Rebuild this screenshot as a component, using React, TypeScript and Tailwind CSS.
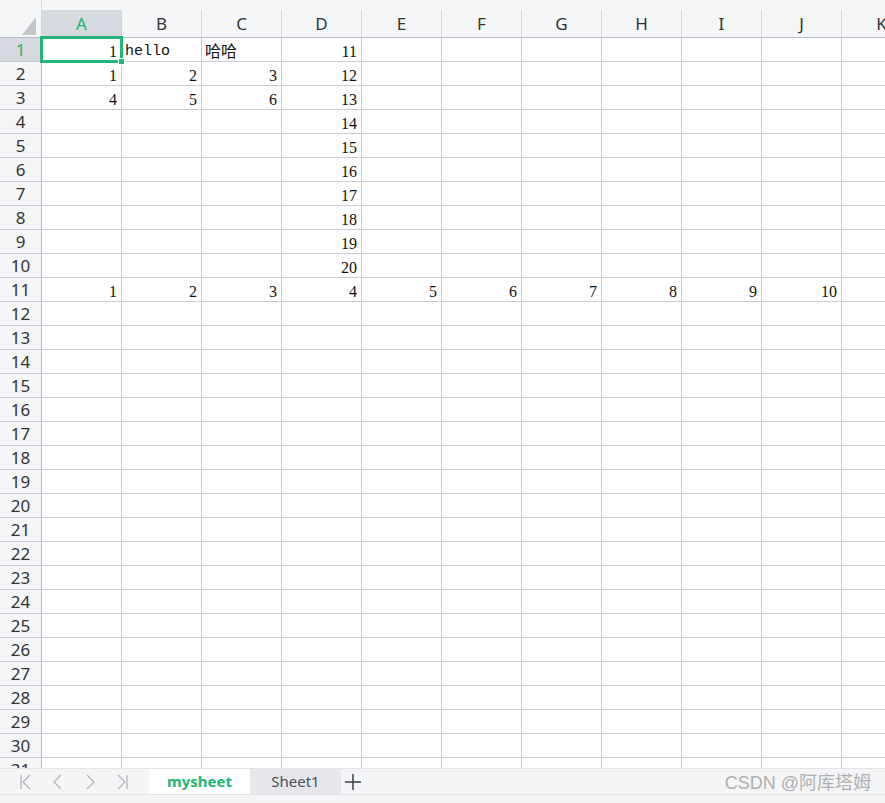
import React from "react";

const COLS = ["A", "B", "C", "D", "E", "F", "G", "H", "I", "J", "K"];
const ROWS = Array.from({ length: 31 }, (_, i) => i + 1);

type Cell = { v: string; kind?: "num" | "text" | "cjk" };

const DATA: Record<string, Cell> = {
  A1: { v: "1", kind: "num" },
  B1: { v: "hello", kind: "text" },
  C1: { v: "哈哈", kind: "cjk" },
  D1: { v: "11", kind: "num" },
  A2: { v: "1", kind: "num" },
  B2: { v: "2", kind: "num" },
  C2: { v: "3", kind: "num" },
  D2: { v: "12", kind: "num" },
  A3: { v: "4", kind: "num" },
  B3: { v: "5", kind: "num" },
  C3: { v: "6", kind: "num" },
  D3: { v: "13", kind: "num" },
  D4: { v: "14", kind: "num" },
  D5: { v: "15", kind: "num" },
  D6: { v: "16", kind: "num" },
  D7: { v: "17", kind: "num" },
  D8: { v: "18", kind: "num" },
  D9: { v: "19", kind: "num" },
  D10: { v: "20", kind: "num" },
};
COLS.slice(0, 10).forEach((c, i) => {
  DATA[`${c}11`] = { v: String(i + 1), kind: "num" };
});

const sans = { fontFamily: '"Noto Sans", "Open Sans", sans-serif' };

function CellBox({ cell }: { cell?: Cell }) {
  if (!cell) return null;
  if (cell.kind === "num")
    return (
      <span
        className="block w-full pr-[4px] pt-[2px] text-right text-[16px] leading-[23px] text-[#111]"
        style={{ fontFamily: '"Liberation Serif", serif' }}
      >
        {cell.v}
      </span>
    );
  if (cell.kind === "cjk")
    return (
      <span
        className="block w-full pl-[3px] pt-[1px] text-left text-[16px] leading-[23px] text-[#111]"
        style={{ fontFamily: '"Noto Sans CJK SC", sans-serif' }}
      >
        {cell.v}
      </span>
    );
  return (
    <span
      className="block w-full pl-[3px] pt-[2px] text-left text-[15px] leading-[23px] text-[#111]"
      style={{ fontFamily: '"Liberation Mono", monospace' }}
    >
      {cell.v}
    </span>
  );
}

function NavIcon({ d }: { d: string }) {
  return (
    <svg width="14" height="18" viewBox="0 0 14 18" fill="none" stroke="#b3b5b9" strokeWidth="1.3">
      <path d={d} />
    </svg>
  );
}

export default function App() {
  return (
    <div className="flex h-[803px] w-[885px] flex-col overflow-hidden bg-white" style={sans}>
      {/* grid */}
      <div className="relative h-[768px] overflow-hidden">
        {/* column header */}
        <div className="flex h-[38px] border-b border-[#b9bdc9] bg-[#f5f6f8]">
          <div className="flex w-[42px] shrink-0 items-end border-r border-[#d5d8de] pb-[2px] pl-[22px]">
            <svg width="14" height="18" viewBox="0 0 14 18">
              <polygon points="14,0 14,18 0,18" fill="#c3c5c9" />
            </svg>
          </div>
          {COLS.map((c, i) => (
            <div key={c} className="flex w-[80px] shrink-0 flex-col justify-end">
              <div
                className={`flex h-[27px] items-center justify-center border-r border-[#d2d5dc] text-[17px] ${
                  i === 0 ? "bg-[#d6d9df] text-[#22b573]" : "text-[#333]"
                }`}
              >
                {c}
              </div>
            </div>
          ))}
        </div>
        {ROWS.map((r) => (
          <div key={r} className="flex h-[24px] border-b border-[#c9ccd6]">
            <div
              className={`flex w-[42px] shrink-0 items-center justify-center border-r border-[#b9bdc9] text-[17px] ${
                r === 1 ? "bg-[#d6d9df] text-[#22b573]" : "bg-[#f5f6f8] text-[#333]"
              }`}
            >
              {r}
            </div>
            {COLS.map((c) => (
              <div key={c} className="flex w-[80px] shrink-0 border-r border-[#c9ccd6]">
                <CellBox cell={DATA[`${c}${r}`]} />
              </div>
            ))}
          </div>
        ))}
        {/* selection */}
        <div className="absolute left-[40px] top-[36px] h-[27px] w-[83px] border-[3px] border-[#21b57a]" />
        <div className="absolute left-[118px] top-[58px] h-[7px] w-[7px] border border-white bg-[#21b57a]" />
      </div>

      {/* sheet tabs */}
      <div className="flex h-[35px] flex-col border-t border-[#e1e3e7] bg-[#f4f5f7]">
        <div className="flex h-[26px] items-center border-b border-[#e1e3e7]">
          <div className="flex w-[149px] items-center pl-[19px]">
            <div className="flex w-[32px]">
              <NavIcon d="M2 2 V16 M11 2 L4 9 L11 16" />
            </div>
            <div className="flex w-[32px]">
              <NavIcon d="M10 2 L3 9 L10 16" />
            </div>
            <div className="flex w-[32px]">
              <NavIcon d="M4 2 L11 9 L4 16" />
            </div>
            <div className="flex w-[32px]">
              <NavIcon d="M3 2 L10 9 L3 16 M12 2 V16" />
            </div>
          </div>
          <div className="flex h-full w-[101px] items-center justify-center bg-white text-[15px] font-bold text-[#22b573]">
            mysheet
          </div>
          <div className="flex h-full w-[91px] items-center justify-center bg-[#e6e7eb] text-[15px] text-[#4b4f58]">
            Sheet1
          </div>
          <div className="flex h-full w-[24px] items-center justify-center">
            <svg width="16" height="16" viewBox="0 0 16 16" stroke="#3b3f48" strokeWidth="1.5">
              <path d="M8 0 V16 M0 8 H16" />
            </svg>
          </div>
          <div
            className="ml-auto mt-[4px] pr-[14px] text-[18px] text-[#b0b0b0]"
            style={{ fontFamily: '"Liberation Sans", "Noto Sans CJK SC", sans-serif' }}
          >
            CSDN @阿库塔姆
          </div>
        </div>
      </div>
    </div>
  );
}
